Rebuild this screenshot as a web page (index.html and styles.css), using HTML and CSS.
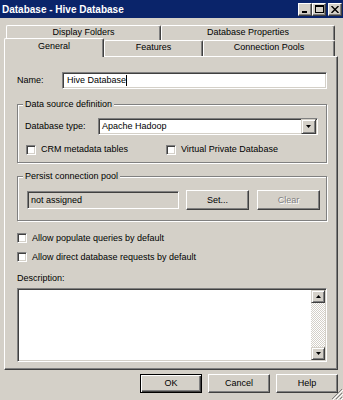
FILE: index.html
```html
<!DOCTYPE html>
<html>
<head>
<meta charset="utf-8">
<title>Database - Hive Database</title>
<link rel="stylesheet" href="styles.css">
</head>
<body>
<div class="window">
  <div class="titlebar">
    <span class="title">Database - Hive Database</span>
    <div class="caption">
      <span class="cbtn"><svg width="8" height="7" viewBox="0 0 8 7"><rect x="1" y="5" width="5" height="2" fill="#000"/></svg></span>
      <span class="cbtn"><svg width="9" height="8" viewBox="0 0 9 8"><rect x="0.5" y="0.5" width="8" height="7" fill="none" stroke="#000"/><rect x="0" y="0" width="9" height="2" fill="#000"/></svg></span>
      <span class="cbtn close"><svg width="8" height="7" viewBox="0 0 8 7"><path d="M0.5 0 L7.5 7 M7.5 0 L0.5 7" stroke="#000" stroke-width="1.4"/></svg></span>
    </div>
  </div>

  <div class="tabs">
    <div class="tabrow back">
      <div class="tab t-folders">Display Folders</div>
      <div class="tab t-props">Database Properties</div>
    </div>
    <div class="tabrow front">
      <div class="tab active t-general">General</div>
      <div class="tab t-features">Features</div>
      <div class="tab t-pools">Connection Pools</div>
    </div>
  </div>

  <div class="panel">
    <div class="name-row">
      <span class="lbl-name">Name:</span>
      <div class="field name-field"><span>Hive Database</span><span class="caret"></span></div>
    </div>

    <fieldset class="group g1">
      <legend>Data source definition</legend>
      <div class="type-row">
        <span class="lbl-type">Database type:</span>
        <div class="field select">
          <span>Apache Hadoop</span>
          <span class="drop-btn"><svg width="5" height="3" viewBox="0 0 5 3"><path d="M0 0 H5 L2.5 3 Z" fill="#000"/></svg></span>
        </div>
      </div>
      <div class="checks">
        <span class="check c-crm"><span class="box"></span>CRM metadata tables</span>
        <span class="check"><span class="box"></span>Virtual Private Database</span>
      </div>
    </fieldset>

    <fieldset class="group g2">
      <legend>Persist connection pool</legend>
      <div class="pool-row">
        <div class="field pool-field">not assigned</div>
        <span class="btn set">Set...</span>
        <span class="btn clear">Clear</span>
      </div>
    </fieldset>

    <div class="opt opt1"><span class="box"></span>Allow populate queries by default</div>
    <div class="opt opt2"><span class="box"></span>Allow direct database requests by default</div>

    <div class="desc-label">Description:</div>
    <div class="field desc">
      <div class="desc-text"></div>
      <div class="sb">
        <span class="sb-btn"><svg width="5" height="3" viewBox="0 0 5 3"><path d="M0 3 H5 L2.5 0 Z" fill="#000"/></svg></span>
        <span class="sb-track"></span>
        <span class="sb-btn"><svg width="5" height="3" viewBox="0 0 5 3"><path d="M0 0 H5 L2.5 3 Z" fill="#000"/></svg></span>
      </div>
    </div>
  </div>

  <div class="actions">
    <span class="btn act ok">OK</span>
    <span class="btn act">Cancel</span>
    <span class="btn act">Help</span>
  </div>

  <svg class="grip" width="12" height="12" viewBox="0 0 12 12">
    <path d="M11 1 L1 11 M11 5 L5 11 M11 9 L9 11" stroke="#808080" stroke-width="1"/>
    <path d="M12 2 L2 12 M12 6 L6 12 M12 10 L10 12" stroke="#fff" stroke-width="1"/>
  </svg>
</div>
</body>
</html>
```

FILE: styles.css
```css
html, body {
  margin: 0;
  padding: 0;
  background: #d4d0c8;
}
body {
  font-family: "Liberation Sans", Arial, sans-serif;
  font-size: 9px;
  line-height: 11px;
  color: #000;
}
.window {
  width: 343px;
  height: 400px;
  background: #d4d0c8;
  position: relative;
  overflow: hidden;
}

/* title bar */
.titlebar {
  height: 18px;
  background: #0a246a;
  display: flex;
  align-items: center;
  justify-content: space-between;
  padding: 0 1px 0 2px;
}
.title {
  color: #fff;
  font-weight: bold;
  font-size: 10px;
}
.caption {
  display: flex;
  align-items: center;
}
.cbtn {
  width: 14px;
  height: 13px;
  box-sizing: border-box;
  background: #d4d0c8;
  border: 1px solid;
  border-color: #fff #404040 #404040 #fff;
  box-shadow: inset -1px -1px #808080;
  display: flex;
  align-items: center;
  justify-content: center;
}
.cbtn.close { margin-left: 2px; }

/* tabs */
.tabs { padding-top: 7px; }
.tabrow { display: flex; }
.tabrow.back { margin-left: 6px; height: 15px; }
.tabrow.front { margin-left: 4px; height: 16px; }
.tab {
  box-sizing: border-box;
  border: 1px solid;
  border-color: #fff #404040 transparent #fff;
  border-bottom: 0;
  border-radius: 2px 2px 0 0;
  box-shadow: inset -1px 0 #808080;
  background: #d4d0c8;
  text-align: center;
  color: #000;
}
.back .tab { height: 15px; line-height: 13px; }
.front .tab { height: 16px; line-height: 13px; }
.front .tab.active {
  height: 19px;
  margin-top: -2px;
  line-height: 15px;
  position: relative;
  z-index: 1;
}
.t-folders { width: 155px; }
.t-props { width: 174px; }
.t-general { width: 100px; }
.t-features { width: 99px; }
.t-pools { width: 132px; }

/* panel */
.panel {
  margin-left: 4px;
  width: 334px;
  height: 314px;
  box-sizing: border-box;
  border: 1px solid;
  border-color: #fff #404040 #404040 #fff;
  box-shadow: inset -1px -1px #808080;
  padding: 15px 10px 0 12px;
}

.field {
  box-sizing: border-box;
  background: #fff;
  border: 1px solid;
  border-color: #808080 #fff #fff #808080;
  box-shadow: inset 1px 1px #404040, inset -1px -1px #d4d0c8;
}

.name-row {
  display: flex;
  align-items: center;
  height: 17px;
}
.lbl-name { width: 45px; }
.name-field {
  flex: 1;
  height: 17px;
  display: flex;
  align-items: center;
  padding-left: 4px;
}
.caret {
  width: 1px;
  height: 11px;
  background: #000;
}

/* group boxes */
.group {
  margin: 10px 0 0;
  padding: 8px 5px 7px 7px;
  border: 1px solid #808080;
  box-shadow: inset 1px 1px #fff, 1px 1px #fff;
  min-width: 0;
}
.group legend {
  padding: 0 2px;
  margin-left: -2px;
  line-height: 11px;
  background: #d4d0c8;
}
.g2 {
  margin-top: 8px;
  padding-bottom: 10px;
}

.type-row {
  display: flex;
  align-items: center;
  height: 17px;
}
.lbl-type { width: 73px; }
.select {
  width: 220px;
  height: 17px;
  display: flex;
  align-items: center;
  justify-content: space-between;
  padding: 1px 1px 1px 3px;
}
.drop-btn {
  width: 15px;
  height: 15px;
  box-sizing: border-box;
  background: #d4d0c8;
  border: 1px solid;
  border-color: #d4d0c8 #404040 #404040 #d4d0c8;
  box-shadow: inset 1px 1px #fff, inset -1px -1px #808080;
  display: flex;
  align-items: center;
  justify-content: center;
}

.checks {
  display: flex;
  align-items: center;
  margin-top: 9px;
  height: 11px;
}
.check {
  display: flex;
  align-items: center;
  gap: 5px;
}
.c-crm {
  width: 140px;
  margin-left: 1px;
}
.box {
  flex: none;
  width: 10px;
  height: 10px;
  box-sizing: border-box;
  background: #fff;
  border: 1px solid;
  border-color: #808080 #fff #fff #808080;
  box-shadow: inset 1px 1px #404040, inset -1px -1px #d4d0c8;
}

.pool-row {
  display: flex;
  align-items: center;
  height: 20px;
  margin-left: 2px;
}
.pool-field {
  width: 152px;
  height: 18px;
  background: #d4d0c8;
  padding-left: 3px;
  display: flex;
  align-items: center;
}
.btn {
  box-sizing: border-box;
  width: 63px;
  height: 20px;
  border: 1px solid;
  border-color: #fff #404040 #404040 #fff;
  box-shadow: inset -1px -1px #808080;
  background: #d4d0c8;
  display: flex;
  align-items: center;
  justify-content: center;
}
.set { margin-left: 7px; }
.clear {
  margin-left: 8px;
  color: #808080;
  text-shadow: 1px 1px #fff;
}

.opt {
  display: flex;
  align-items: center;
  gap: 5px;
  height: 12px;
}
.opt1 { margin-top: 11px; }
.opt2 { margin-top: 7px; }

.desc-label {
  margin-top: 10px;
  height: 11px;
}
.desc {
  margin-top: 4px;
  height: 74px;
  display: flex;
  padding: 1px;
}
.desc-text { flex: 1; }
.sb {
  width: 14px;
  display: flex;
  flex-direction: column;
}
.sb-btn {
  height: 13px;
  box-sizing: border-box;
  background: #d4d0c8;
  border: 1px solid;
  border-color: #d4d0c8 #404040 #404040 #d4d0c8;
  box-shadow: inset 1px 1px #fff, inset -1px -1px #808080;
  display: flex;
  align-items: center;
  justify-content: center;
}
.sb-track {
  flex: 1;
  background: repeating-conic-gradient(#fff 0 25%, #d4d0c8 0 50%) 0 0 / 2px 2px;
}

/* bottom buttons */
.actions {
  display: flex;
  justify-content: flex-end;
  gap: 6px;
  padding: 4px 5px 0 0;
}
.btn.act {
  width: 62px;
  height: 19px;
}
.btn.ok {
  border-color: #000;
  box-shadow: inset 1px 1px #fff, inset -1px -1px #404040, inset -2px -2px #808080;
}

.grip {
  position: absolute;
  right: 0;
  bottom: 0;
}
```
